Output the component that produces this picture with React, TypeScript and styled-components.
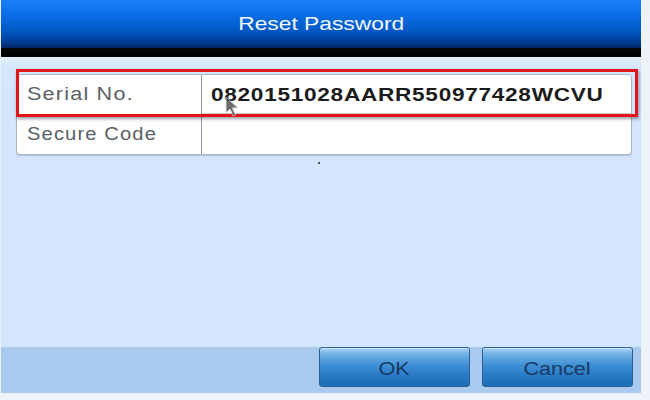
import React from "react";
import styled, { createGlobalStyle } from "styled-components";

const Global = createGlobalStyle`
  html, body { margin: 0; padding: 0; background: #eef3f9; }
  body { font-family: "Liberation Sans", Arial, sans-serif; }
`;

const Screen = styled.div`
  width: 650px;
  height: 400px;
  background: #eef3f9;
  display: flex;
  align-items: flex-start;
  overflow: hidden;
`;

const Dialog = styled.div`
  width: 641px;
  height: 393px;
  display: flex;
  flex-direction: column;
  background: #d3e6fd;
  border-left: 1px solid #e8f1fc;
  box-sizing: border-box;
`;

const TitleBar = styled.div`
  height: 57px;
  flex: none;
  display: flex;
  flex-direction: column;
`;

const TitleBlue = styled.div`
  height: 48px;
  display: flex;
  align-items: center;
  justify-content: center;
  background: linear-gradient(to bottom, #1a80f8 0%, #0a6ee8 30%, #0058c4 65%, #003a8a 90%, #002560 100%);
  color: #f4f8ff;
  font-size: 19px;
`;

const TitleShadow = styled.div`
  height: 9px;
  background: linear-gradient(to bottom, #050505, #000000);
`;

const Stretch = styled.span<{ $sx: number; $origin?: string }>`
  display: inline-block;
  white-space: nowrap;
  transform: scaleX(${(p) => p.$sx});
  transform-origin: ${(p) => p.$origin ?? "left center"};
`;

const Body = styled.div`
  flex: 1;
  position: relative;
  padding: 17px 9px 0 15px;
  background: linear-gradient(to bottom, #e2edf9 0px, #d6e7fb 10px, #d3e6fd 30px);
`;

const Table = styled.div`
  display: grid;
  grid-template-columns: 185px 1fr;
  background: #ffffff;
  border: 1px solid #aab8c6;
  border-radius: 4px;
  box-shadow: 0 1px 1px rgba(120, 140, 170, 0.4);
`;

const LabelCell = styled.div<{ $last?: boolean }>`
  height: 39px;
  display: flex;
  align-items: center;
  padding-left: 10px;
  border-right: 1px solid #8c9aa8;
  border-bottom: ${(p) => (p.$last ? "none" : "1px solid #c4ccd6")};
  color: #5a5f66;
  font-size: 18px;
  letter-spacing: 1px;
`;

const ValueCell = styled.div<{ $last?: boolean }>`
  height: 39px;
  display: flex;
  align-items: center;
  padding-left: 9px;
  border-bottom: ${(p) => (p.$last ? "none" : "1px solid #c4ccd6")};
  color: #1c1c1c;
  font-size: 19px;
  font-weight: bold;
  letter-spacing: 0.6px;
  padding-top: 2px;
  box-sizing: border-box;
`;

const Highlight = styled.div`
  position: absolute;
  left: 15px;
  top: 12px;
  width: 622px;
  height: 48px;
  border: 3px solid #e3141c;
  box-sizing: border-box;
  box-shadow: 1px 2px 3px rgba(40, 40, 60, 0.45);
  pointer-events: none;
`;

const Cursor = styled.svg`
  position: absolute;
  left: 224px;
  top: 39px;
  opacity: 0.75;
`;

const Dot = styled.div`
  position: absolute;
  left: 317px;
  top: 105px;
  width: 2px;
  height: 2px;
  background: #4a5260;
`;

const Footer = styled.div`
  height: 46px;
  flex: none;
  display: flex;
  justify-content: flex-end;
  align-items: flex-start;
  gap: 12px;
  padding-right: 8px;
  background: #a9c9ee;
`;

const Button = styled.button`
  width: 151px;
  height: 40px;
  border: 1px solid #2d5f8f;
  border-radius: 3px;
  background: linear-gradient(to bottom, #a8d2f4 0%, #6fb0e6 18%, #3f8fd4 45%, #2a7cc6 70%, #1c6cb8 100%);
  color: #183a64;
  font-family: "Liberation Sans", Arial, sans-serif;
  font-size: 18px;
  padding: 4px 0 0;
  box-shadow: inset 0 1px 0 rgba(255, 255, 255, 0.5);
`;

export default function App() {
  return (
    <>
      <Global />
      <Screen>
        <Dialog>
          <TitleBar>
            <TitleBlue>
              <Stretch $sx={1.2} $origin="center">Reset Password</Stretch>
            </TitleBlue>
            <TitleShadow />
          </TitleBar>
          <Body>
            <Table>
              <LabelCell>
                <Stretch $sx={1.2}>Serial No.</Stretch>
              </LabelCell>
              <ValueCell>
                <Stretch $sx={1.19}>0820151028AARR550977428WCVU</Stretch>
              </ValueCell>
              <LabelCell $last>
                <Stretch $sx={1.12}>Secure Code</Stretch>
              </LabelCell>
              <ValueCell $last />
            </Table>
            <Highlight />
            <Cursor width="14" height="22" viewBox="0 0 14 22">
              <path d="M1 1 L1 17 L5 13 L8 20 L10.5 19 L7.5 12 L13 12 Z" fill="#3a3a3a" stroke="#d8d8d8" strokeWidth="1" />
            </Cursor>
            <Dot />
          </Body>
          <Footer>
            <Button>
              <Stretch $sx={1.2} $origin="center">OK</Stretch>
            </Button>
            <Button>
              <Stretch $sx={1.2} $origin="center">Cancel</Stretch>
            </Button>
          </Footer>
        </Dialog>
      </Screen>
    </>
  );
}
